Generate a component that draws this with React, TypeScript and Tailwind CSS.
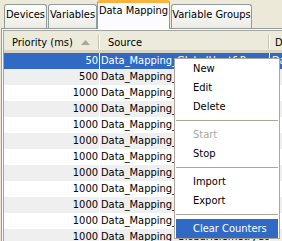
const ROWS = [
  { p: 50, s: "Data_Mapping_GlobalHeat&PowerMeter", d: "Data" },
  { p: 500, s: "Data_Mapping_Alarms", d: "" },
  { p: 1000, s: "Data_Mapping_Boiler1", d: "" },
  { p: 1000, s: "Data_Mapping_Boiler2", d: "" },
  { p: 1000, s: "Data_Mapping_Chiller1", d: "" },
  { p: 1000, s: "Data_Mapping_Chiller2", d: "" },
  { p: 1000, s: "Data_Mapping_Pump1", d: "" },
  { p: 1000, s: "Data_Mapping_Pump2", d: "" },
  { p: 1000, s: "Data_Mapping_Valve1", d: "" },
  { p: 1000, s: "Data_Mapping_Valve2", d: "" },
  { p: 1000, s: "Data_Mapping_Fan1", d: "" },
  { p: 1000, s: "Data_Mapping_GlobalTelemetryCounter", d: "" },
];

type MenuEntry = { label?: string; disabled?: boolean; active?: boolean; sep?: boolean };

const MENU: MenuEntry[] = [
  { label: "New" },
  { label: "Edit" },
  { label: "Delete" },
  { sep: true },
  { label: "Start", disabled: true },
  { label: "Stop" },
  { sep: true },
  { label: "Import" },
  { label: "Export" },
  { sep: true },
  { label: "Clear Counters", active: true },
];

function Tab({ label, width, selected }: { label: string; width: string; selected?: boolean }) {
  if (selected) {
    return (
      <div
        className={`${width} relative z-10 -mb-px h-[29px] shrink-0 rounded-t-[3px] border-x border-[#919b9c] border-t-[3px] border-t-[#f7b33d] bg-[#fcfcfe] pt-[1px] text-center leading-[14px] whitespace-nowrap`}
      >
        {label}
      </div>
    );
  }
  return (
    <div
      className={`${width} h-[24px] shrink-0 rounded-t-[3px] border-x border-t border-[#919b9c] bg-gradient-to-b from-[#fefefe] to-[#ecebe5] pt-[3px] text-center leading-[14px] whitespace-nowrap`}
    >
      {label}
    </div>
  );
}

export default function App() {
  return (
    <div className="relative h-[241px] w-[282px] overflow-hidden bg-[#ece9d8] font-['DejaVu_Sans_Condensed','DejaVu_Sans',sans-serif] font-stretch-condensed text-[11px] text-black">
      {/* Tabs */}
      <div className="flex h-[28px] items-end pl-[4px]">
        <Tab label="Devices" width="w-[43px]" />
        <div className="w-[1px] shrink-0" />
        <Tab label="Variables" width="w-[49px]" />
        <Tab label="Data Mapping" width="w-[73px]" selected />
        <div className="w-[1px] shrink-0" />
        <Tab label="Variable Groups" width="w-[81px]" />
      </div>

      {/* Panel */}
      <div className="ml-[1px] h-[213px] border-l border-t border-[#919b9c] bg-[#fcfcfe] pl-[1px] pt-[1px]">
        <div className="h-full overflow-hidden border-l border-t border-[#a5a59e] bg-white">
          {/* Header */}
          <div className="flex h-[22px] whitespace-nowrap border-b-[3px] border-b-[#d9d5c4] bg-[#ebeadb]">
            <div className="flex w-[94px] shrink-0 items-start pl-[8px] pr-[8px] pt-[5px] leading-[14px]">
              <span>Priority (ms)</span>
              <svg className="ml-auto mt-[4px] shrink-0" width="9" height="5" viewBox="0 0 9 5">
                <path d="M4.5 0 L9 5 L0 5 Z" fill="#aca899" />
              </svg>
            </div>
            <div className="mt-[4px] h-[14px] w-[1px] shrink-0 bg-[#c7c5b2]" />
            <div className="mt-[4px] h-[14px] w-[1px] shrink-0 bg-white" />
            <div className="w-[168px] shrink-0 pl-[8px] pt-[5px] leading-[14px]">Source</div>
            <div className="mt-[4px] h-[14px] w-[1px] shrink-0 bg-[#c7c5b2]" />
            <div className="mt-[4px] h-[14px] w-[1px] shrink-0 bg-white" />
            <div className="shrink-0 pl-[5px] pt-[5px] leading-[14px]">Description</div>
          </div>

          {/* Rows */}
          {ROWS.map((r, i) => {
            const sel = i === 0;
            const bg = sel ? "bg-[#316ac5] text-white" : i % 2 === 1 ? "bg-[#efefef]" : "bg-white";
            return (
              <div key={i} className={`flex h-[16px] whitespace-nowrap leading-[16px] ${bg}`}>
                <div className="w-[95px] shrink-0 pr-[1px] text-right">{r.p}</div>
                <div className="w-[1px] shrink-0 bg-white" />
                <div className="w-[169px] shrink-0 overflow-hidden pl-[1px]">{r.s}</div>
                <div className="w-[1px] shrink-0 bg-white" />
                <div className="shrink-0 pl-[2px]">{r.d}</div>
              </div>
            );
          })}
        </div>
      </div>

      {/* Context menu */}
      <div className="absolute left-[174px] top-[58px] w-[106px] border border-[#aca899] bg-white">
        {MENU.map((m, i) =>
          m.sep ? (
            <div key={i} className="flex h-[9px] items-center px-[1px]">
              <div className="h-[1px] w-full bg-[#aca899]" />
            </div>
          ) : (
            <div
              key={i}
              className={`h-[19px] whitespace-nowrap leading-[19px] ${
                m.active ? "mx-[1px] bg-[#316ac5] pl-[17px] text-white" : m.disabled ? "pl-[18px] text-[#aca899]" : "pl-[18px]"
              }`}
            >
              {m.label}
            </div>
          )
        )}
      </div>
    </div>
  );
}
